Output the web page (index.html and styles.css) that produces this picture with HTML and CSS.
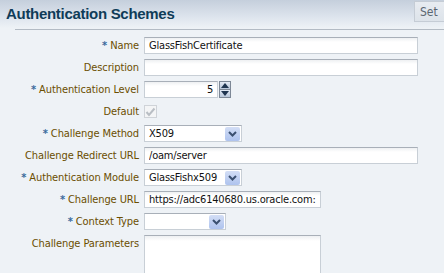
FILE: index.html
```html
<!DOCTYPE html>
<html>
<head>
    <title>Authentication Schemes</title>
    <link rel="stylesheet" href="styles.css">
</head>
<body>
    <div class="header">
        <h1>Authentication Schemes</h1>
        <button class="set-button">Set</button>
    </div>
    <div class="rule"></div>

    <div class="form">
        <label><span class="req">*</span> Name</label>
        <div class="field"><input class="text wide" value="GlassFishCertificate"></div>

        <label>Description</label>
        <div class="field"><input class="text wide" value=""></div>

        <label><span class="req">*</span> Authentication Level</label>
        <div class="field">
            <input class="text level" value="5">
            <span class="spinner">
                <span class="spin up"><svg width="8" height="5" viewBox="0 0 8 5"><path d="M4 0 L8 5 L0 5 Z" fill="#1f3550"/></svg></span>
                <span class="spin down"><svg width="8" height="5" viewBox="0 0 8 5"><path d="M0 0 L8 0 L4 5 Z" fill="#1f3550"/></svg></span>
            </span>
        </div>

        <label>Default</label>
        <div class="field">
            <span class="check"><svg width="11" height="10" viewBox="0 0 11 10"><path d="M1.5 5 L4 8 L9.5 1.5" fill="none" stroke="#b9bec4" stroke-width="2"/></svg></span>
        </div>

        <label><span class="req">*</span> Challenge Method</label>
        <div class="field">
            <span class="select method">X509<span class="drop"><svg width="9" height="6" viewBox="0 0 9 6"><path d="M1 1 L4.5 4.5 L8 1" fill="none" stroke="#3b5070" stroke-width="2"/></svg></span></span>
        </div>

        <label>Challenge Redirect URL</label>
        <div class="field"><input class="text wide" value="/oam/server"></div>

        <label><span class="req">*</span> Authentication Module</label>
        <div class="field">
            <span class="select module">GlassFishx509<span class="drop"><svg width="9" height="6" viewBox="0 0 9 6"><path d="M1 1 L4.5 4.5 L8 1" fill="none" stroke="#3b5070" stroke-width="2"/></svg></span></span>
        </div>

        <label><span class="req">*</span> Challenge URL</label>
        <div class="field"><input class="text url" value="https://adc6140680.us.oracle.com:"></div>

        <label><span class="req">*</span> Context Type</label>
        <div class="field">
            <span class="select context"><span class="drop"><svg width="9" height="6" viewBox="0 0 9 6"><path d="M1 1 L4.5 4.5 L8 1" fill="none" stroke="#3b5070" stroke-width="2"/></svg></span></span>
        </div>

        <label>Challenge Parameters</label>
        <div class="field params-field"><textarea class="params"></textarea></div>
    </div>
</body>
</html>
```

FILE: styles.css
```css
html, body {
    height: 273px;
    overflow: hidden;
}
body {
    margin: 0;
    padding: 0;
    background-color: #eef2f6;
    font-family: "DejaVu Sans Condensed", "DejaVu Sans", sans-serif;
    font-size: 11px;
}
.header {
    height: 28px;
    display: flex;
    justify-content: space-between;
    align-items: flex-start;
    background: linear-gradient(#c5cfdc, #dde4ed 60%, #eef2f6);
}
.header h1 {
    margin: 0;
    padding: 5px 0 0 6px;
    font-family: "Liberation Sans", Arial, sans-serif;
    font-size: 15px;
    font-weight: bold;
    color: #0f3c58;
    letter-spacing: -0.3px;
}
.set-button {
    margin-top: 1px;
    width: 30px;
    height: 21px;
    border: 1px solid #c5ccd5;
    border-right: none;
    background: linear-gradient(#e8ecf1, #dde3ea);
    color: #5b6672;
    font-family: "DejaVu Sans Condensed", "DejaVu Sans", sans-serif;
    font-size: 12px;
    padding: 0 0 0 5px;
    text-align: left;
}
.rule {
    margin-left: 15px;
    border-top: 1px solid #b3bbc4;
    height: 0;
    margin-top: 1px;
}
.form {
    display: grid;
    grid-template-columns: 139px 1fr;
    column-gap: 5px;
    row-gap: 5px;
    padding-top: 7px;
}
.form label {
    text-align: right;
    color: #6b4e00;
    font-size: 11px;
    letter-spacing: -0.1px;
    line-height: 17px;
    white-space: nowrap;
}
.req {
    color: #3a6b9c;
    font-weight: bold;
}
.field {
    display: flex;
    align-items: center;
    height: 17px;
}
.text {
    box-sizing: border-box;
    height: 17px;
    border: 1px solid #c8cfd6;
    border-top-color: #a8afb8;
    background: linear-gradient(#eef0f2, #ffffff 4px);
    font-family: "DejaVu Sans Condensed", "DejaVu Sans", sans-serif;
    font-size: 11px;
    letter-spacing: -0.2px;
    color: #111;
    padding: 0 4px;
    outline: none;
}
.wide {
    width: 274px;
}
.level {
    width: 74px;
    text-align: right;
}
.url {
    width: 177px;
}
.spinner {
    display: flex;
    flex-direction: column;
    margin-left: 1px;
    width: 12px;
    height: 17px;
    box-sizing: border-box;
    border: 1px solid #7d8896;
}
.spin {
    flex: 1;
    display: flex;
    align-items: center;
    justify-content: center;
    background: linear-gradient(#e4ebf5, #b9c7da);
}
.spin.up {
    border-bottom: 1px solid #7d8896;
}
.check {
    display: flex;
    align-items: center;
    justify-content: center;
    box-sizing: border-box;
    width: 13px;
    height: 13px;
    border: 1px solid #cfd3d8;
    background: #f4f5f6;
}
.select {
    box-sizing: border-box;
    display: flex;
    align-items: center;
    height: 17px;
    padding-left: 4px;
    border: 1px solid #c8cfd6;
    border-top-color: #a8afb8;
    background: #fff;
    font-size: 11px;
    letter-spacing: -0.2px;
    color: #111;
}
.method {
    width: 98px;
}
.module {
    width: 98px;
}
.context {
    width: 82px;
}
.drop {
    margin-left: auto;
    width: 15px;
    height: 14px;
    margin-right: 1px;
    display: flex;
    align-items: center;
    justify-content: center;
    background: linear-gradient(#d3def5, #aec3ee);
    border-radius: 2px;
}
.params-field {
    height: 40px;
    align-items: flex-start;
}
.params {
    box-sizing: border-box;
    width: 177px;
    height: 40px;
    margin: 0;
    border: 1px solid #c8cfd6;
    border-top-color: #a8afb8;
    background: linear-gradient(#eef0f2, #ffffff 5px);
    resize: none;
}
```
